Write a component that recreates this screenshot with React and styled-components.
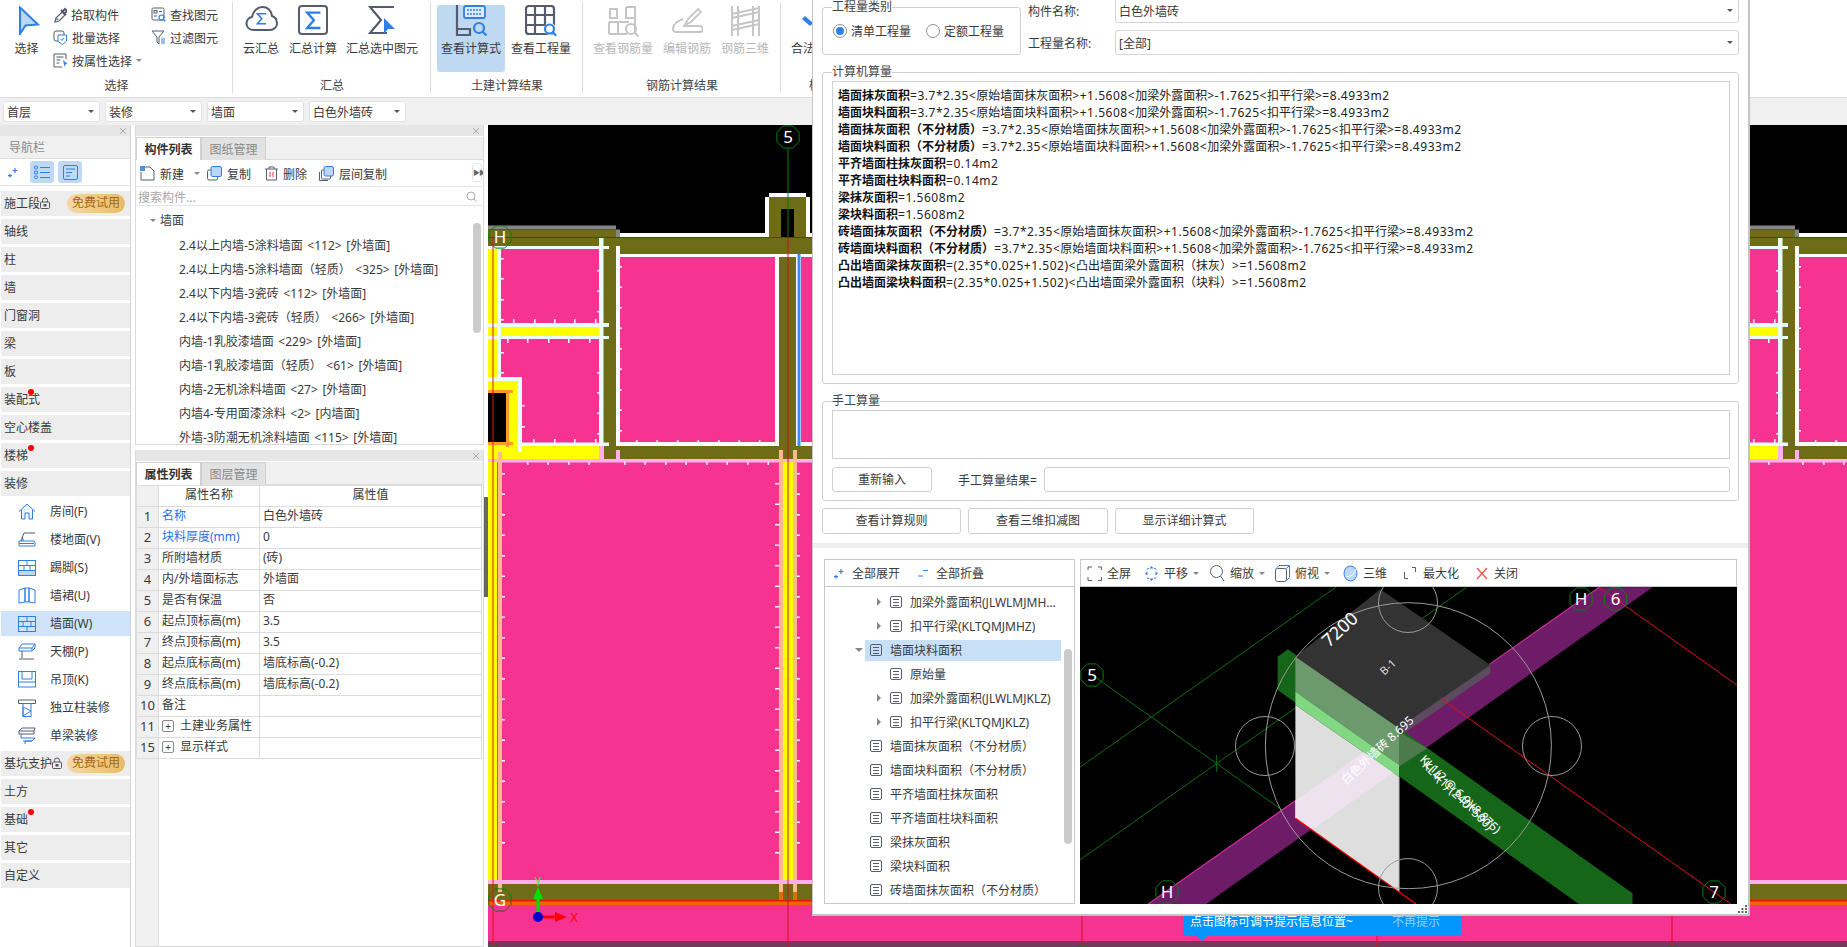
import React from "react";
import styled, { createGlobalStyle } from "styled-components";

const FONT = `"Noto Sans", "Noto Sans CJK SC", sans-serif`;
const GRAY = "#555c6e";
const BLUE = "#2f7fe6";
const PALE = "#bcd7f5";
const DIM = "#c6c6c6";

const Global = createGlobalStyle`
  html, body { margin: 0; padding: 0; background: #fff; overflow: hidden; }
  body { font-family: ${FONT}; font-size: 12px; color: #3a3a3a; }
  * { box-sizing: border-box; }
  svg { display: block; flex-shrink: 0; }
`;

const Page = styled.div`
  position: relative;
  width: 1847px;
  height: 947px;
  overflow: hidden;
  display: flex;
  flex-direction: column;
  background: #fff;
`;

/* ---------- ribbon ---------- */
const Ribbon = styled.div`
  display: flex;
  height: 98px;
  border-bottom: 1px solid #dcdcdc;
  background: #fff;
  flex-shrink: 0;
`;
const Group = styled.div`
  width: ${(p) => p.$w}px;
  display: flex;
  flex-direction: column;
  flex-shrink: 0;
  position: relative;
  &::after {
    content: "";
    position: absolute;
    right: 0;
    top: 2px;
    bottom: 4px;
    width: 1px;
    background: #ddd;
  }
`;
const GroupBody = styled.div`
  display: flex;
  height: 77px;
  padding-top: 5px;
  padding-left: ${(p) => p.$pl || 0}px;
  flex-shrink: 0;
`;
const GroupLabel = styled.div`
  text-align: center;
  line-height: 18px;
  color: #444;
`;
const BigBtn = styled.div`
  width: ${(p) => p.$w}px;
  margin-left: ${(p) => p.$ml || 0}px;
  height: 67px;
  display: flex;
  flex-direction: column;
  align-items: center;
  border-radius: 3px;
  flex-shrink: 0;
  background: ${(p) => (p.$active ? "#c0d9f3" : "transparent")};
  color: ${(p) => (p.$off ? "#b8b8b8" : "#3a3a3a")};
`;
const BigIcon = styled.div`
  height: 36px;
  display: flex;
  align-items: flex-start;
  justify-content: center;
`;
const BigText = styled.div`
  line-height: 16px;
  white-space: nowrap;
`;
const SmallCol = styled.div`
  display: flex;
  flex-direction: column;
  margin-top: -2px;
  width: ${(p) => p.$w}px;
  flex-shrink: 0;
`;
const SmallBtn = styled.div`
  height: 23px;
  display: flex;
  align-items: center;
  gap: 4px;
  white-space: nowrap;
`;
const Caret = styled.span`
  width: 0;
  height: 0;
  border-left: 3px solid transparent;
  border-right: 3px solid transparent;
  border-top: 3px solid ${(p) => p.$c || "#8a8a8a"};
  margin-left: ${(p) => p.$ml || 0}px;
  margin-right: ${(p) => p.$mr || 0}px;
  flex-shrink: 0;
`;

/* ---------- filter bar ---------- */
const FilterBar = styled.div`
  height: 27px;
  background: #f0f0f0;
  display: flex;
  gap: 5px;
  padding: 3px 3px;
  flex-shrink: 0;
`;
const Drop = styled.div`
  width: 97px;
  height: 21px;
  background: #fff;
  border: 1px solid #e2e2e2;
  border-radius: 3px;
  display: flex;
  align-items: center;
  justify-content: space-between;
  padding: 0 5px 0 3px;
`;

/* ---------- main ---------- */
const Main = styled.div`
  flex: 1;
  display: flex;
  min-height: 0;
`;
const Nav = styled.div`
  width: 131px;
  border-right: 1px solid #d4d4d4;
  display: flex;
  flex-direction: column;
  flex-shrink: 0;
`;
const Strip = styled.div`
  height: 11px;
  background: #e6e6e6;
  display: flex;
  align-items: center;
  justify-content: flex-end;
  padding-right: 3px;
  flex-shrink: 0;
`;
const NavTitle = styled.div`
  height: 23px;
  background: #f0f0f0;
  color: #8a8a8a;
  display: flex;
  align-items: center;
  padding-left: 9px;
  border-bottom: 1px solid #ddd;
`;
const NavTools = styled.div`
  height: 27px;
  display: flex;
  align-items: center;
  gap: 4px;
  padding-left: 8px;
  border-bottom: 1px solid #e6e6e6;
`;
const NavTool = styled.div`
  width: 24px;
  height: 22px;
  border-radius: 3px;
  background: #c0d9f3;
  display: flex;
  align-items: center;
  justify-content: center;
  margin-left: ${(p) => p.$ml || 0}px;
`;
const NavList = styled.div`
  display: flex;
  flex-direction: column;
  gap: 3px;
  padding: 5px 0 0 1px;
`;
const NavItem = styled.div`
  height: 25px;
  background: #ededed;
  display: flex;
  align-items: center;
  padding: 0 0 2px 3px;
  position: relative;
  white-space: nowrap;
`;
const Dot = styled.span`
  position: absolute;
  left: 27px;
  top: 2px;
  width: 6px;
  height: 6px;
  border-radius: 50%;
  background: #f00;
`;
const Pill = styled.span`
  position: absolute;
  left: 66px;
  top: 3px;
  width: 58px;
  height: 19px;
  border-radius: 10px;
  background: linear-gradient(90deg, #f6d8a6, #e9bb66);
  color: #a5660f;
  text-align: center;
  line-height: 18px;
`;
const SubItem = styled.div`
  height: 25px;
  display: flex;
  align-items: center;
  padding-left: 17px;
  gap: 14px;
  white-space: nowrap;
  background: ${(p) => (p.$on ? "#cfe4fb" : "transparent")};
  line-height: 22px;
`;

const Mid = styled.div`
  width: 349px;
  margin-left: 4px;
  display: flex;
  flex-direction: column;
  gap: 5px;
  flex-shrink: 0;
`;
const Panel = styled.div`
  border: 1px solid #dadada;
  border-top: 0;
  display: flex;
  flex-direction: column;
  height: ${(p) => (p.$h ? `${p.$h}px` : "auto")};
  flex: ${(p) => (p.$h ? "none" : 1)};
  min-height: 0;
  overflow: hidden;
`;
const Tabs = styled.div`
  display: flex;
  height: 23px;
  margin-top: 1px;
  background: #f0f0f0;
  border-bottom: 1px solid #dadada;
  flex-shrink: 0;
`;
const Tab = styled.div`
  width: ${(p) => p.$w}px;
  text-align: center;
  line-height: 23px;
  font-weight: ${(p) => (p.$on ? 700 : 400)};
  color: ${(p) => (p.$on ? "#333" : "#8a8a8a")};
  background: ${(p) => (p.$on ? "#fff" : "#e2e2e2")};
  border: 1px solid #d0d0d0;
  border-bottom: 0;
  height: 23px;
  flex-shrink: 0;
`;
const ListBar = styled.div`
  height: 27px;
  display: flex;
  align-items: center;
  padding: 1px 0 0 4px;
  gap: 5px;
  border-bottom: 1px solid #e6e6e6;
  position: relative;
  flex-shrink: 0;
`;
const BarGap = styled.span`
  width: ${(p) => p.$w}px;
  flex-shrink: 0;
`;
const Expander = styled.div`
  position: absolute;
  right: 1px;
  top: 3px;
  width: 10px;
  height: 19px;
  border: 1px solid #e6e6e6;
  border-radius: 3px;
  color: #666;
  font-size: 7px;
  line-height: 17px;
  text-align: center;
  letter-spacing: -1px;
`;
const Search = styled.div`
  height: 19px;
  display: flex;
  align-items: center;
  justify-content: space-between;
  padding: 1px 6px 0 2px;
  color: #a8a8a8;
  border-bottom: 1px solid #e6e6e6;
  flex-shrink: 0;
`;
const Tree = styled.div`
  position: relative;
  flex: 1;
  padding-top: 3px;
  overflow: hidden;
`;
const TreeHead = styled.div`
  height: 25px;
  display: flex;
  align-items: flex-start;
  gap: 4px;
  padding-left: 14px;
  line-height: 24px;
  & > span {
    margin-top: 10px;
  }
`;
const TreeItem = styled.div`
  height: 24px;
  line-height: 24px;
  padding-left: 43px;
  white-space: pre;
  word-spacing: 1.5px;
`;
const Thumb = styled.div`
  position: absolute;
  width: 8px;
  border-radius: 4px;
  background: #cbcbcb;
  top: ${(p) => p.$t}px;
  right: ${(p) => p.$r}px;
  height: ${(p) => p.$h}px;
`;
const PropBody = styled.div`
  flex: 1;
  background: linear-gradient(90deg, #f0f0f0 22px, #e0e0e0 22px, #e0e0e0 23px, #fff 23px);
  min-height: 0;
`;
const PropTable = styled.table`
  border-collapse: collapse;
  table-layout: fixed;
  width: 345px;
  background: #fff;
  & td {
    height: 21px;
    padding: 0 3px 2px;
    border: 1px solid #dcdcdc;
    white-space: nowrap;
    overflow: hidden;
    line-height: 18px;
  }
  & tr > td:first-child {
    background: #f0f0f0;
    text-align: center;
    padding: 0 0 2px;
    font-size: 13px;
  }
`;
const Head = styled.td`
  text-align: center;
`;
const PropName = styled.td`
  color: ${(p) => (p.$blue ? "#2b6fe8" : "inherit")};
`;
const PlusCell = styled.span`
  display: inline-flex;
  align-items: center;
  gap: 6px;
`;
const Plus = styled.span`
  width: 12px;
  height: 12px;
  border: 1px solid #8a8a8a;
  border-radius: 2px;
  font-size: 10px;
  line-height: 10px;
  text-align: center;
`;
const Splitter = styled.div`
  width: 4px;
  flex-shrink: 0;
  padding-top: 372px;
`;
const Grip = styled.div`
  height: 100px;
  background: #666;
`;
const Canvas = styled.div`
  flex: 1;
  min-width: 0;
  background: #000;
`;

/* ---------- floating dialog ---------- */
const Dialog = styled.div`
  position: absolute;
  left: 812px;
  top: 0;
  width: 938px;
  height: 916px;
  background: #fff;
  border: 1px solid #c4c4c4;
  border-top: 0;
  border-right-width: 2px;
  border-bottom-width: 2px;
  display: flex;
  flex-direction: column;
  z-index: 3;
`;
const Upper = styled.div`
  padding: 0 9px 0 9px;
  display: flex;
  flex-direction: column;
  gap: 10px;
`;
const TopRow = styled.div`
  display: flex;
  height: 55px;
  gap: 7px;
`;
const Field = styled.fieldset`
  margin: 0;
  padding: 2px 8px 8px 9px;
  min-width: 0;
  width: ${(p) => (p.$w ? `${p.$w}px` : "auto")};
  height: ${(p) => p.$h}px;
  border: 1px solid #d0d0d0;
  border-radius: 3px;
  flex-shrink: 0;
`;
const Legend = styled.legend`
  padding: 0;
  margin-left: 0;
  line-height: 14px;
  height: 14px;
  color: #444;
`;
const Radios = styled.div`
  display: flex;
  align-items: center;
  height: 30px;
  margin-left: 1px;
`;
const Radio = styled.span`
  width: 14px;
  height: 14px;
  border: 1px solid #8f8f8f;
  border-radius: 50%;
  display: flex;
  align-items: center;
  justify-content: center;
  margin-right: 4px;
  flex-shrink: 0;
  &::after {
    content: "";
    width: 8px;
    height: 8px;
    border-radius: 50%;
    background: ${(p) => (p.$on ? "#2f7fe6" : "transparent")};
  }
`;
const RadioText = styled.span`
  margin-right: ${(p) => p.$mr || 0}px;
  white-space: nowrap;
`;
const FormCol = styled.div`
  flex: 1;
  display: flex;
  flex-direction: column;
  gap: 7px;
  margin-top: -2px;
`;
const FormRow = styled.div`
  display: flex;
  align-items: center;
  height: 25px;
`;
const FormLabel = styled.span`
  width: 87px;
  flex-shrink: 0;
`;
const FormSelect = styled.div`
  flex: 1;
  height: 25px;
  border: 1px solid #d4d4d4;
  border-radius: 3px;
  display: flex;
  align-items: center;
  justify-content: space-between;
  padding: 0 5px 0 3px;
`;
const TextBox = styled.div`
  height: ${(p) => p.$h}px;
  border: 1px solid #d0d0d0;
  padding: 5px 5px;
  line-height: 17px;
  color: #222;
`;
const CalcLine = styled.div`
  white-space: pre;
  height: 17px;
`;
const Strong = styled.b`
  font-weight: 700;
  color: #111;
`;
const Latin = styled.span`
  letter-spacing: 0.52px;
`;
const InputRow = styled.div`
  display: flex;
  align-items: center;
  height: 25px;
  margin-top: 8px;
`;
const Btn = styled.div`
  width: ${(p) => p.$w}px;
  height: ${(p) => p.$h || 26}px;
  border: 1px solid #d0d0d0;
  border-radius: 3px;
  text-align: center;
  line-height: ${(p) => (p.$h || 26) - 2}px;
  flex-shrink: 0;
`;
const InputLabel = styled.span`
  margin-left: 26px;
  width: 86px;
  flex-shrink: 0;
  white-space: nowrap;
`;
const Input = styled.div`
  flex: 1;
  height: 25px;
  border: 1px solid #d0d0d0;
  border-radius: 3px;
`;
const BtnRow = styled.div`
  display: flex;
  gap: 7px;
  margin-top: -3px;
`;
const Rule = styled.div`
  height: 5px;
  background: #eee;
  margin-top: 9px;
  flex-shrink: 0;
`;
const Lower = styled.div`
  display: flex;
  gap: 5px;
  padding: 11px 0 0 11px;
  flex: 1;
  min-height: 0;
`;
const LeftCol = styled.div`
  width: 251px;
  height: 345px;
  display: flex;
  flex-direction: column;
  flex-shrink: 0;
`;
const RightCol = styled.div`
  width: 657px;
  height: 345px;
  display: flex;
  flex-direction: column;
  flex-shrink: 0;
`;
const MiniBar = styled.div`
  height: 28px;
  border: 1px solid #c8c8c8;
  display: flex;
  align-items: center;
  flex-shrink: 0;
  padding-left: ${(p) => p.$pl}px;
  background: #fff;
`;
const MiniItem = styled.div`
  display: flex;
  align-items: center;
  gap: ${(p) => (p.$gap === undefined ? 5 : p.$gap)}px;
  margin-right: ${(p) => p.$mr || 0}px;
  white-space: nowrap;
`;
const CalcTree = styled.div`
  flex: 1;
  position: relative;
  border: 1px solid #c8c8c8;
  border-top: 0;
  padding-top: 3px;
  overflow: hidden;
  min-height: 0;
`;
const CalcRow = styled.div`
  height: 24px;
  position: relative;
  display: flex;
  align-items: center;
  white-space: nowrap;
  padding-left: ${(p) => p.$pl}px;
`;
const RowFill = styled.div`
  position: absolute;
  left: 40px;
  width: 196px;
  top: 2px;
  height: 21px;
  background: #c8dff8;
`;
const RowCaret = styled.span`
  width: 10px;
  margin-right: 6px;
  height: 10px;
  position: relative;
  flex-shrink: 0;
  z-index: 1;
  ${(p) =>
    p.$open
      ? `&::after{content:"";position:absolute;left:1px;top:3px;border-left:4px solid transparent;border-right:4px solid transparent;border-top:4px solid #888;}`
      : p.$closed
      ? `&::after{content:"";position:absolute;left:3px;top:1px;border-top:4px solid transparent;border-bottom:4px solid transparent;border-left:4px solid #888;}`
      : ""}
`;
const RowIcon = styled.span`
  width: 12px;
  height: 12px;
  border: 1px solid #565c6c;
  border-radius: 2px;
  margin-right: 8px;
  flex-shrink: 0;
  position: relative;
  z-index: 1;
  background: linear-gradient(#565c6c, #565c6c) 2px 2px / 6px 1px no-repeat,
    linear-gradient(#565c6c, #565c6c) 2px 5px / 6px 1px no-repeat,
    linear-gradient(#565c6c, #565c6c) 2px 8px / 6px 1px no-repeat;
`;
const RowText = styled.span`
  position: relative;
  z-index: 1;
  width: ${(p) => (p.$clip ? "146px" : "auto")};
  overflow: hidden;
  text-overflow: ${(p) => (p.$clip ? "ellipsis" : "clip")};
`;
const Grippy = styled.div`
  position: absolute;
  right: 1px;
  bottom: 1px;
`;
const Tip = styled.div`
  position: absolute;
  left: 1183px;
  top: 900px;
  width: 278px;
  height: 36px;
  background: #0095ff;
  border-radius: 3px;
  z-index: 2;
  display: flex;
  align-items: flex-end;
  padding: 0 0 5px 7px;
  color: #fff;
  line-height: 18px;
  &::after {
    content: "";
    position: absolute;
    left: 14px;
    top: 36px;
    border-left: 5px solid transparent;
    border-right: 5px solid transparent;
    border-top: 5px solid #0095ff;
  }
`;
const TipMute = styled.span`
  margin-left: 39px;
  color: #8fd0ff;
`;

/* ---------- icons ---------- */
const Sigma = ({ x = 0, y = 0, s = 1, c = BLUE, w = 2.2 }) => (
  <path transform={`translate(${x} ${y}) scale(${s})`} d="M14 1H2l6 7-6 7h12" stroke={c} strokeWidth={w} fill="none" />
);
const Ic = ({ w, h, children }) => (
  <svg width={w} height={h} viewBox={`0 0 ${w} ${h}`} fill="none">
    {children}
  </svg>
);
const Mag = ({ x, y, r = 4, c = BLUE, w = 1.8 }) => (
  <g stroke={c} strokeWidth={w}>
    <circle cx={x} cy={y} r={r} fill="#fff" fillOpacity="0" />
    <path d={`M${x + r * 0.7} ${y + r * 0.7}l${r * 0.8} ${r * 0.8}`} />
  </g>
);
const icons = {
  arrow: (
    <Ic w={26} h={30}>
      <path d="M6 2.5l18 17-12.5 1L6 29z" fill={PALE} stroke={BLUE} strokeWidth="2" />
    </Ic>
  ),
  pick: (
    <Ic w={14} h={16}>
      <path d="M2 15l1-4 6-6 3 3-6 6z" stroke={GRAY} strokeWidth="1.2" />
      <path d="M8 3l5 5M9 5l3-3 2 2-3 3" stroke={GRAY} strokeWidth="2" />
      <path d="M3 13l1-2 2 2" fill={BLUE} />
    </Ic>
  ),
  batch: (
    <Ic w={15} h={15}>
      <rect x="1" y="1" width="10" height="10" rx="2" stroke={GRAY} />
      <path d="M5 5h8.5v6l-4 3.5-4.5-3z" fill="#fff" stroke={BLUE} />
      <path d="M7.5 9l1.5 1.5 2-2.5" stroke={BLUE} />
    </Ic>
  ),
  attr: (
    <Ic w={15} h={15}>
      <path d="M13 6V1H1v13h8" stroke={GRAY} />
      <path d="M3.5 4h7M3.5 7h4M3.5 10h3" stroke={GRAY} />
      <path d="M10 7l4.5 4-2 .3-1 2.7z" fill={BLUE} />
    </Ic>
  ),
  find: (
    <Ic w={15} h={15}>
      <rect x="1" y="1" width="12" height="12" rx="1.5" stroke={GRAY} />
      <rect x="3" y="3.5" width="3" height="2.5" stroke={GRAY} />
      <path d="M8 4.5h3M3 9h3" stroke={GRAY} />
      <Mag x={10.5} y={10.5} r={2.5} w={1.2} />
    </Ic>
  ),
  filter: (
    <Ic w={15} h={15}>
      <path d="M1 1h12L8 7v7l-2-2V7z" stroke={GRAY} />
      <path d="M10 9h4M10 11h4M10 13h4" stroke={BLUE} />
    </Ic>
  ),
  cloud: (
    <Ic w={33} h={27}>
      <path d="M9 25C4 25 1.500 22 1.500 18.500 1.500 15 4 12.500 7 12 8 6 12.500 2 17.500 2 22.500 2 26 5.500 27 11 30 12 32 15 32 18.500 32 22 29 25 25 25z" stroke={GRAY} strokeWidth="2" />
      <Sigma x={11} y={8} s={0.72} />
    </Ic>
  ),
  sumBox: (
    <Ic w={30} h={30}>
      <rect x="1" y="1" width="28" height="28" rx="3" stroke={GRAY} strokeWidth="2" />
      <Sigma x={7} y={6.500} s={1.1} w={2.2} />
    </Ic>
  ),
  sumSel: (
    <Ic w={28} h={30}>
      <path d="M26 2H2l11 13L2 28h17" stroke={GRAY} strokeWidth="2.2" />
      <path d="M16 13l11 11-7 0-4 5z" fill={BLUE} />
    </Ic>
  ),
  calc: (
    <Ic w={32} h={32}>
      <path d="M2 0v30h13v-6H2" stroke={GRAY} strokeWidth="2.2" />
      <rect x="9" y="1" width="21" height="12" rx="2" stroke={BLUE} strokeWidth="1.8" fill="#dceaf9" />
      <path d="M12 5h15M12 9h15" stroke={BLUE} strokeWidth="1.5" strokeDasharray="2 1" />
      <Mag x={24} y={23} r={5} w={2.2} />
    </Ic>
  ),
  qty: (
    <Ic w={32} h={32}>
      <rect x="1" y="1" width="28" height="28" rx="3" stroke={GRAY} strokeWidth="2.2" />
      <path d="M1 10h28M1 20h20M10 1v28M20 1v18" stroke={GRAY} strokeWidth="2.2" />
      <circle cx="25" cy="24" r="6" fill="#fff" />
      <Mag x={24.500} y={24} r={4.500} w={2.2} />
    </Ic>
  ),
  rebarQty: (
    <Ic w={32} h={32}>
      <path d="M3 4h7v9H3zM19 2h9v27M19 2v11h9M2 17h20M2 29h18M11 17v12M2 17v12" stroke={DIM} strokeWidth="2" />
      <Mag x={24} y={24} r={5} c={DIM} w={2.2} />
    </Ic>
  ),
  rebarEdit: (
    <Ic w={32} h={32}>
      <path d="M14 20l3-6 10-10 3 3-10 10-6 3z" stroke={DIM} strokeWidth="1.8" />
      <path d="M12 14C6 16 2 20 2 24c0 2 2 3 4 3h23c2 0 3-1 3-3s-2-3-4-3H12" stroke={DIM} strokeWidth="2" />
    </Ic>
  ),
  rebar3d: (
    <Ic w={32} h={32}>
      <path d="M3 1v30M9 1v30M24 1v30M30 1v30M3 9l27-6M3 21l27-6M3 13l27-6M3 25l27-6" stroke={DIM} strokeWidth="2" />
    </Ic>
  ),
  legal: (
    <Ic w={34} h={30}>
      <path d="M13 11l8 7-3 3-8-7z" fill={BLUE} />
    </Ic>
  ),
  close: (
    <Ic w={8} h={8}>
      <path d="M1 1l6 6M7 1L1 7" stroke="#aaa" />
    </Ic>
  ),
  expand: (
    <Ic w={11} h={11}>
      <path d="M7 1v5M4.500 3.500h5M2 7v3.500M0 8.700h4" stroke={BLUE} strokeWidth="1.200" />
    </Ic>
  ),
  collapse: (
    <Ic w={11} h={11}>
      <path d="M5 2.500h5M0 8h5" stroke={BLUE} strokeWidth="1.200" />
    </Ic>
  ),
  list: (
    <Ic w={16} h={14}>
      <rect x="0.500" y="1" width="3" height="3" rx="1" stroke={BLUE} />
      <rect x="0.500" y="6" width="3" height="3" rx="1" stroke={BLUE} />
      <rect x="0.500" y="11" width="3" height="2.500" rx="1" stroke={BLUE} />
      <path d="M6 2.500h10M6 7.500h10M6 12.500h10" stroke={BLUE} />
    </Ic>
  ),
  card: (
    <Ic w={15} h={15}>
      <rect x="0.500" y="0.500" width="14" height="14" rx="1.500" stroke={BLUE} />
      <path d="M3 4h9M3 7.500h6M3 11h4" stroke={BLUE} />
    </Ic>
  ),
  lock: (
    <Ic w={10} h={12}>
      <path d="M2.500 5V3.500a2.500 2.500 0 0 1 5 0V5" stroke="#555" />
      <rect x="0.500" y="5" width="9" height="6.500" rx="1" stroke="#555" />
      <rect x="3.500" y="7" width="3" height="2.500" fill="#555" />
    </Ic>
  ),
  newDoc: (
    <Ic w={15} h={15}>
      <path d="M3 1h7l4 4v9H1V6" stroke={GRAY} />
      <rect x="0" y="0" width="5" height="5" fill={BLUE} opacity=".85" />
    </Ic>
  ),
  copy: (
    <Ic w={15} h={15}>
      <rect x="0.500" y="4" width="10" height="10" rx="1.500" stroke={GRAY} />
      <rect x="4" y="0.500" width="10.500" height="10" rx="1.500" fill={PALE} stroke={BLUE} />
    </Ic>
  ),
  trash: (
    <Ic w={13} h={15}>
      <path d="M0 3h13M4 3V1h5v2M1.500 3v11h10V3" stroke={GRAY} />
      <path d="M5 6v5M8 6v5" stroke="#e33" />
    </Ic>
  ),
  layerCopy: (
    <Ic w={15} h={15}>
      <path d="M0.500 6v8.500H9" stroke={GRAY} />
      <rect x="2.500" y="4" width="9" height="9" rx="1" stroke={GRAY} />
      <rect x="5" y="0.500" width="9.500" height="9.500" rx="1.500" fill={PALE} stroke={BLUE} />
    </Ic>
  ),
  search: (
    <Ic w={11} h={11}>
      <circle cx="5" cy="5" r="4" stroke="#aaa" />
      <path d="M8 8l2.500 2.500" stroke="#aaa" />
    </Ic>
  ),
  house: (
    <Ic w={18} h={17}>
      <path d="M1 8.500L9 1l8 7.500M3.500 7v9h3.500v-6h4v6h3.500V7" stroke={BLUE} fill={PALE} fillOpacity=".35" />
    </Ic>
  ),
  floor: (
    <Ic w={18} h={15}>
      <path d="M3 9L6 1h11M4 5l1.500 4" stroke={GRAY} />
      <path d="M1 9h15l1 1v4H1zM1 11.500h15" stroke={BLUE} fill="#fff" />
    </Ic>
  ),
  skirt: (
    <Ic w={18} h={16}>
      <rect x="0.500" y="0.500" width="17" height="15" stroke={BLUE} />
      <rect x="0.500" y="10.500" width="17" height="5" fill={PALE} stroke={BLUE} />
      <path d="M0.500 5.500h17M9 0.500v5M6 5.500v5M12 5.500v5" stroke={BLUE} />
    </Ic>
  ),
  dado: (
    <Ic w={18} h={17}>
      <path d="M1 3l6-2v14l-6 1zM7 1h4v14H7zM11 1l6 2v13l-6-1z" stroke={BLUE} />
    </Ic>
  ),
  wall: (
    <Ic w={18} h={16}>
      <rect x="0.500" y="0.500" width="17" height="15" stroke={BLUE} />
      <path d="M0.500 5.500h17M0.500 10.500h17M9 0.500v5M5 5.500v5M13 5.500v5M9 10.500v5" stroke={BLUE} />
    </Ic>
  ),
  ceil: (
    <Ic w={18} h={17}>
      <path d="M1 5h13l3-4H4zM1 5v3h13V5M14 8l3-3V1" stroke={BLUE} fill="#fff" />
      <path d="M4 8v7M1 16h15" stroke={GRAY} />
    </Ic>
  ),
  drop: (
    <Ic w={18} h={17}>
      <rect x="0.500" y="0.500" width="17" height="15.500" stroke={BLUE} />
      <path d="M4 1v7h10V1" stroke={BLUE} fill="#fff" />
      <path d="M0.500 11h17" stroke={BLUE} />
    </Ic>
  ),
  column: (
    <Ic w={18} h={18}>
      <path d="M0.500 1h17v3.500H0.500z" stroke={GRAY} />
      <rect x="5" y="4.500" width="8" height="13" stroke={BLUE} />
      <path d="M5 8l8 4-8 5z" stroke={BLUE} />
    </Ic>
  ),
  beam: (
    <Ic w={18} h={17}>
      <path d="M1 4L4 1h13l-1 3zM1 4v3h15V4" stroke={GRAY} />
      <path d="M3 7v4h14l-3 3H7v3M5 14h9" stroke={BLUE} />
    </Ic>
  ),
  full: (
    <Ic w={15} h={15}>
      <path d="M1 4V1h4M11 1h3.500v3M14.500 11v3.500H11M5 14.500H1V11" stroke={GRAY} />
    </Ic>
  ),
  move: (
    <Ic w={15} h={17}>
      <path d="M7.500 1l2 2.500h-4zM7.500 16l2-2.500h-4zM1 8.500l2.500-2v4zM14 8.500l-2.500-2v4z" fill={BLUE} />
      <path d="M5 3.500h-1.500L3 5M10 3.500h1.500L12 5M3 12l.5 1.500H5M12 12l-.5 1.500H10" stroke={BLUE} strokeWidth=".8" />
    </Ic>
  ),
  zoom: (
    <Ic w={15} h={17}>
      <circle cx="6.500" cy="6.500" r="6" stroke={GRAY} />
      <path d="M10.500 11l3.500 5" stroke={GRAY} />
    </Ic>
  ),
  cube: (
    <Ic w={15} h={17}>
      <rect x="0.500" y="3.500" width="11" height="13" rx="2" stroke={GRAY} />
      <path d="M1 3.500L4 0.500h10.500v12l-3 3M11.500 3.500l3-3" stroke={BLUE} fill="none" />
    </Ic>
  ),
  sphere: (
    <Ic w={15} h={17}>
      <ellipse cx="7.500" cy="8.500" rx="6.500" ry="7.500" fill={PALE} stroke={BLUE} />
      <path d="M3 11.500C8 12 12 9 13 4" stroke="#fff" />
    </Ic>
  ),
  maxi: (
    <Ic w={12} h={12}>
      <path d="M0.500 5v6.500H4M8 0.500h3.500V5" stroke={GRAY} />
    </Ic>
  ),
  cross: (
    <Ic w={12} h={13}>
      <path d="M1 1l10 11M11 1L1 12" stroke="#f0504a" strokeWidth="1.200" />
    </Ic>
  ),
  grip: (
    <Ic w={9} h={8}>
      <path d="M7 0h2v2H7zM3.500 3h2v2h-2zM7 3h2v2H7zM0 6h2v2H0zM3.500 6h2v2h-2zM7 6h2v2H7z" fill="#666" />
    </Ic>
  ),
};

/* ---------- main drawing ---------- */
const OLIVE = "#6f6c18";
const PINK = "#f73391";
const RAIL = "#e9fdfb";
const STRIP = "#ffb0ec";
const PEACH = "#ffb98f";
const steps = (from, to, step = 20.5) => {
  const out = [];
  for (let v = from; v <= to; v += step) out.push(v);
  return out;
};
const octagon = (cx, cy, r) =>
  Array.from({ length: 8 }, (_, i) => {
    const a = (i * Math.PI * 2) / 8 + Math.PI / 8;
    return `${(cx + r * Math.cos(a)).toFixed(1)},${(cy + r * Math.sin(a)).toFixed(1)}`;
  }).join(" ");

const Marker = ({ x, y, t, r = 12, size = 17 }) => (
  <g>
    <polygon points={octagon(x, y, r)} fill="none" stroke="#0a7d12" strokeWidth="1" />
    <text x={x} y={y + size * 0.36} fill="#fff" fontSize={size} textAnchor="middle">
      {t}
    </text>
  </g>
);
const HTicks = ({ xs, y, h = 3, c = "#fff" }) => xs.map((x) => <rect key={x} x={x} y={y} width="1.500" height={h} fill={c} />);
const VTicks = ({ ys, x, w = 3, c = "#fff" }) => ys.map((y) => <rect key={y} x={x} y={y} width={w} height="1.500" fill={c} />);

const Module = ({ dx }) => (
  <g transform={`translate(${dx} 0)`}>
    <rect x="488" y="225.500" width="128" height="4" fill="#868686" />
    <rect x="616" y="229.500" width="4" height="8" fill="#868686" />
    <rect x="488" y="229.500" width="128" height="8" fill={OLIVE} />
    <rect x="620" y="233" width="400" height="4" fill="#fff" />
    <rect x="488" y="237" width="532" height="222" fill={OLIVE} />
    {/* left rooms */}
    <rect x="488" y="246" width="9" height="214" fill="#ff0" />
    <rect x="501" y="249" width="98" height="74" fill={PINK} />
    <rect x="501" y="339" width="98" height="104" fill={PINK} />
    <rect x="488" y="327" width="111" height="9" fill="#ff0" />
    <rect x="488" y="446" width="111" height="13" fill="#ff0" />
    <rect x="488" y="246" width="121" height="3" fill={RAIL} />
    <rect x="488" y="323" width="121" height="4" fill={RAIL} />
    <rect x="488" y="336" width="121" height="3" fill={RAIL} />
    <rect x="497" y="246" width="4" height="135" fill={RAIL} />
    <rect x="599" y="237" width="4.500" height="215" fill={RAIL} />
    <rect x="522" y="442.500" width="87" height="3.500" fill={RAIL} />
    <rect x="599" y="446" width="5" height="13" fill={STRIP} />
    <VTicks ys={[258, 278, 299, 319, 352, 372]} x={501} />
    <VTicks ys={[270, 290.500, 311, 372, 392, 412.500, 433]} x={597} w={2} />
    <HTicks xs={[513, 534, 554, 574, 595]} y={319} h={4} />
    <HTicks xs={[507, 527, 548, 568, 589]} y={339} h={4} />
    <HTicks xs={[533, 554, 574, 595]} y={439} h={3.500} />
    {/* centre room */}
    <rect x="616" y="246" width="4" height="200" fill="#fff" />
    <rect x="616" y="254" width="400" height="3" fill="#fff" />
    <rect x="616" y="442" width="400" height="4" fill="#fff" />
    <rect x="620" y="257" width="400" height="185" fill={PINK} />
    <rect x="616" y="450" width="4" height="9" fill={STRIP} />
    <VTicks ys={steps(266, 434)} x={620} w={2} />
    <HTicks xs={steps(636, 780)} y={440} h={2} />
  </g>
);

const Stage = () => (
  <svg width="1359" height="822" viewBox="488 125 1359 822">
    <rect x="488" y="125" width="1359" height="822" fill="#000" />
    <rect x="488" y="459" width="1359" height="488" fill={PINK} />
    {[0, 1179].map((dx) => (
      <Module key={dx} dx={dx} />
    ))}
    {/* door block */}
    <rect x="488" y="381" width="32" height="65" fill="#ff0" />
    <rect x="488" y="377" width="30" height="4" fill={RAIL} />
    <rect x="518" y="377" width="4" height="75" fill={RAIL} />
    <rect x="488" y="392" width="18" height="50" fill="#000" />
    <rect x="488" y="390" width="25" height="3" fill="#ff9a2a" />
    <rect x="488" y="442" width="25" height="3" fill="#ff9a2a" />
    <rect x="506" y="390" width="3" height="57" fill="#ff9a2a" />
    <VTicks ys={[405, 426]} x={522} />
    {/* centre column cap */}
    <rect x="765" y="197" width="45" height="36" fill="#fff" />
    <rect x="769" y="193" width="37" height="4" fill="#fff" />
    <rect x="769" y="197" width="37" height="40" fill={OLIVE} />
    <rect x="781" y="209" width="13" height="28" fill="#000" />
    <rect x="779" y="257" width="17" height="189" fill={OLIVE} />
    <rect x="775" y="254" width="4" height="192" fill="#fff" />
    <rect x="796" y="254" width="5" height="192" fill="#fff" />
    <rect x="797.500" y="254" width="3" height="192" fill="#3b8bff" />
    {/* lower room */}
    <rect x="488" y="459" width="1359" height="3.500" fill={STRIP} />
    <HTicks xs={steps(527, 600)} y={462} />
    <HTicks xs={steps(624, 780)} y={462} />
    <HTicks xs={[1768, 1802, 1823, 1843]} y={462} />
    <rect x="488" y="462" width="9" height="418" fill="#ff0" />
    <rect x="498" y="452" width="4" height="436" fill={PEACH} />
    <VTicks ys={steps(473, 862)} x={502} />
    <rect x="779" y="450" width="4" height="438" fill={PEACH} />
    <rect x="783" y="462" width="10" height="418" fill="#ff0" />
    <rect x="793" y="450" width="4" height="438" fill={PEACH} />
    <VTicks ys={steps(483, 872)} x={775} w={4} />
    <VTicks ys={steps(473, 862)} x={797} />
    <rect x="488" y="884" width="1359" height="16" fill={OLIVE} />
    <rect x="488" y="880" width="1359" height="4" fill={STRIP} />
    <rect x="488" y="901" width="1359" height="4" fill="#e46b00" />
    <rect x="498" y="884" width="4" height="8" fill={PEACH} />
    <rect x="779" y="884" width="4" height="8" fill={PEACH} />
    <rect x="793" y="884" width="4" height="8" fill={PEACH} />
    <rect x="779" y="892" width="4" height="9" fill="#e46b00" />
    <rect x="793" y="892" width="4" height="9" fill="#e46b00" />
    <rect x="488" y="941" width="1359" height="6" fill="#743a5c" />
    {/* axis lines */}
    <rect x="488" y="237" width="1359" height="1" fill="#d90000" />
    <rect x="488" y="900" width="1359" height="1.500" fill="#f01010" />
    <rect x="787.500" y="149" width="1" height="88" fill="#0a7d12" />
    {[493, 788, 1082, 1377, 1672].map((x) => (
      <rect key={x} x={x - 0.5} y="237" width="1" height="710" fill={x === 493 ? "#ee1111" : "#d80f1f"} />
    ))}
    {[493, 1082, 1672].map((x) => (
      <polygon key={x} points={octagon(x, 958, 12)} fill="none" stroke="#0a7d12" />
    ))}
    <Marker x={788} y={137} t="5" />
    <Marker x={500} y={237} t="H" />
    <Marker x={500} y={900} t="G" />
    {/* coordinate gizmo */}
    <rect x="536.500" y="896" width="3" height="21" fill="#00e000" />
    <polygon points="533,899 538,887 543,899" fill="#00e000" />
    <text x="538" y="886" fill="#40e040" fontSize="12" textAnchor="middle">Y</text>
    <rect x="538" y="915.500" width="18" height="3" fill="#f00" />
    <polygon points="555,912 567,917 555,922" fill="#f00" />
    <circle cx="538" cy="917" r="5" fill="#0000c8" />
    <text x="574" y="922" fill="#f00" fontSize="13" textAnchor="middle">X</text>
  </svg>
);

/* ---------- 3D preview ---------- */
const P = (X, Y) => [1070 + X / 2.24, 550 + Y / 3];
const pts = (...list) => list.map(([X, Y]) => P(X, Y).map((v) => v.toFixed(1)).join(",")).join(" ");
const Seg = ({ a, b, c, w = 1 }) => {
  const [x1, y1] = P(...a);
  const [x2, y2] = P(...b);
  return <line x1={x1} y1={y1} x2={x2} y2={y2} stroke={c} strokeWidth={w} />;
};
const Label = ({ at, rot, size, fill = "#fff", children }) => {
  const [x, y] = P(...at);
  return (
    <text x={x} y={y} fill={fill} fontSize={size} textAnchor="middle" transform={`rotate(${rot} ${x} ${y})`}>
      {children}
    </text>
  );
};
const Preview = () => (
  <svg width="657" height="317" viewBox="1080 587 657 317">
    <rect x="1080" y="587" width="657" height="317" fill="#000" />
    <Seg a={[22, 652]} b={[595, 112]} c="#0a6e10" />
    <Seg a={[22, 930]} b={[888, 112]} c="#0a6e10" />
    <Seg a={[50, 375]} b={[480, 785]} c="#0a6e10" />
    <Seg a={[328, 615]} b={[328, 665]} c="#0a6e10" />
    <polygon points={pts([175, 1062], [1185, 112], [1305, 112], [305, 1062])} fill="#6e1c68" />
    <Seg a={[175, 1062]} b={[1185, 112]} c="#d12f9b" w={1.2} />
    <polygon points={pts([488, 298], [1260, 1030], [1260, 1062], [1140, 1062], [465, 420], [465, 320])} fill="#16661a" />
    <polygon points={pts([695, 118], [942, 345], [942, 368], [745, 552], [505, 320])} fill="#333" />
    <polygon points={pts([942, 345], [942, 370], [750, 548], [737, 533])} fill="#5c4a5e" />
    <polygon points={pts([505, 320], [737, 535], [737, 645], [505, 425])} fill="#6c9a6c" />
    <polygon points={pts([737, 545], [800, 595], [737, 650])} fill="#4c7a4c" />
    <polygon points={pts([505, 425], [737, 645], [737, 680], [505, 465])} fill="#82d882" />
    <polygon points={pts([505, 465], [737, 680], [737, 1025], [505, 805])} fill="#dedede" />
    <polygon points={pts([505, 752], [658, 607], [724, 668], [542, 839], [505, 805])} fill="#efe2ef" />
    <Seg a={[737, 680]} b={[737, 1025]} c="#bbb" />
    <Seg a={[505, 805]} b={[775, 1062]} c="#f00" w={1.2} />
    <Seg a={[830, 445]} b={[1480, 1062]} c="#e01010" />
    <Seg a={[1185, 112]} b={[1494, 405]} c="#e01010" />
    <g fill="none" stroke="#9a9a9a">
      <circle cx="1408.400" cy="745.700" r="143" />
      <circle cx="1408" cy="603" r="29.500" />
      <circle cx="1408" cy="888" r="29.500" />
      <circle cx="1265" cy="746" r="29.500" />
      <circle cx="1552" cy="746" r="29.500" />
    </g>
    <Label at={[614, 252]} rot={-43} size={18}>7200</Label>
    <Label at={[718, 360]} rot={-43} size={11} fill="#ddd">B-1</Label>
    <Label at={[695, 610]} rot={-43} size={12}>白色外墙砖 8.695</Label>
    <Label at={[862, 745]} rot={44} size={12}>KL4(1) (240*500)</Label>
    <Label at={[868, 742]} rot={44} size={12}>KL1(2 @ 6.9)(8.875)</Label>
    <Marker x={1092} y={675} t="5" />
    <Marker x={1581} y={599} t="H" />
    <Marker x={1615.500} y={599} t="6" />
    <Marker x={1167} y={892} t="H" />
    <Marker x={1714} y={892} t="7" />
  </svg>
);

/* ---------- data ---------- */
const navTop = [
  { t: "施工段", lock: true, pill: true },
  { t: "轴线" },
  { t: "柱" },
  { t: "墙" },
  { t: "门窗洞" },
  { t: "梁" },
  { t: "板" },
  { t: "装配式", dot: true },
  { t: "空心楼盖" },
  { t: "楼梯", dot: true },
  { t: "装修" },
];
const navSub = [
  ["house", "房间(F)"],
  ["floor", "楼地面(V)"],
  ["skirt", "踢脚(S)"],
  ["dado", "墙裙(U)"],
  ["wall", "墙面(W)", true],
  ["ceil", "天棚(P)"],
  ["drop", "吊顶(K)"],
  ["column", "独立柱装修"],
  ["beam", "单梁装修"],
];
const navEnd = [
  { t: "基坑支护", lock: true, pill: true },
  { t: "土方" },
  { t: "基础", dot: true },
  { t: "其它" },
  { t: "自定义" },
];
const parts = [
  "2.4以上内墙-5涂料墙面 <112> [外墙面]",
  "2.4以上内墙-5涂料墙面（轻质） <325> [外墙面]",
  "2.4以下内墙-3瓷砖 <112> [外墙面]",
  "2.4以下内墙-3瓷砖（轻质） <266> [外墙面]",
  "内墙-1乳胶漆墙面 <229> [外墙面]",
  "内墙-1乳胶漆墙面（轻质） <61> [外墙面]",
  "内墙-2无机涂料墙面 <27> [外墙面]",
  "内墙4-专用面漆涂料 <2> [内墙面]",
  "外墙-3防潮无机涂料墙面 <115> [外墙面]",
];
const props = [
  ["1", "名称", "白色外墙砖", true],
  ["2", "块料厚度(mm)", "0", true],
  ["3", "所附墙材质", "(砖)"],
  ["4", "内/外墙面标志", "外墙面"],
  ["5", "是否有保温", "否"],
  ["6", "起点顶标高(m)", "3.5"],
  ["7", "终点顶标高(m)", "3.5"],
  ["8", "起点底标高(m)", "墙底标高(-0.2)"],
  ["9", "终点底标高(m)", "墙底标高(-0.2)"],
  ["10", "备注", ""],
];
const mortar = "=3.7*2.35<原始墙面抹灰面积>+1.5608<加梁外露面积>-1.7625<扣平行梁>=8.4933m2";
const tile = "=3.7*2.35<原始墙面块料面积>+1.5608<加梁外露面积>-1.7625<扣平行梁>=8.4933m2";
const calc = [
  ["墙面抹灰面积", mortar],
  ["墙面块料面积", tile],
  ["墙面抹灰面积（不分材质）", mortar],
  ["墙面块料面积（不分材质）", tile],
  ["平齐墙面柱抹灰面积", "=0.14m2"],
  ["平齐墙面柱块料面积", "=0.14m2"],
  ["梁抹灰面积", "=1.5608m2"],
  ["梁块料面积", "=1.5608m2"],
  ["砖墙面抹灰面积（不分材质）", mortar],
  ["砖墙面块料面积（不分材质）", tile],
  ["凸出墙面梁抹灰面积", "=(2.35*0.025+1.502)<凸出墙面梁外露面积（抹灰）>=1.5608m2"],
  ["凸出墙面梁块料面积", "=(2.35*0.025+1.502)<凸出墙面梁外露面积（块料）>=1.5608m2"],
];
const calcTree = [
  [2, "加梁外露面积(JLWLMJMHZ)", "closed", true],
  [2, "扣平行梁(KLTQMJMHZ)", "closed"],
  [1, "墙面块料面积", "open"],
  [2, "原始量"],
  [2, "加梁外露面积(JLWLMJKLZ)", "closed"],
  [2, "扣平行梁(KLTQMJKLZ)", "closed"],
  [1, "墙面抹灰面积（不分材质）"],
  [1, "墙面块料面积（不分材质）"],
  [1, "平齐墙面柱抹灰面积"],
  [1, "平齐墙面柱块料面积"],
  [1, "梁抹灰面积"],
  [1, "梁块料面积"],
  [1, "砖墙面抹灰面积（不分材质）"],
];

const NavRow = ({ t, lock, pill, dot }) => (
  <NavItem>
    {t}
    {lock && icons.lock}
    {dot && <Dot />}
    {pill && <Pill>免费试用</Pill>}
  </NavItem>
);
const Big = ({ w, ml, icon, text, active, off }) => (
  <BigBtn $w={w} $ml={ml} $active={active} $off={off}>
    <BigIcon>{icons[icon]}</BigIcon>
    <BigText>{text}</BigText>
  </BigBtn>
);
/* latin runs of the formula are set slightly wider, as in the original's hinted font */
const Formula = ({ text }) =>
  text.split(/([\u4e00-\u9fff（）]+)/).map((run, i) => (i % 2 ? run : <Latin key={i}>{run}</Latin>));

export default function App() {
  return (
    <Page>
      <Global />
      <Ribbon>
        <Group $w={233}>
          <GroupBody>
            <Big w={53} icon="arrow" text="选择" />
            <SmallCol $w={98}>
              <SmallBtn>{icons.pick}拾取构件</SmallBtn>
              <SmallBtn>{icons.batch}批量选择</SmallBtn>
              <SmallBtn>
                {icons.attr}按属性选择<Caret />
              </SmallBtn>
            </SmallCol>
            <SmallCol $w={70}>
              <SmallBtn>{icons.find}查找图元</SmallBtn>
              <SmallBtn>{icons.filter}过滤图元</SmallBtn>
            </SmallCol>
          </GroupBody>
          <GroupLabel>选择</GroupLabel>
        </Group>
        <Group $w={198}>
          <GroupBody>
            <Big w={56} icon="cloud" text="云汇总" />
            <Big w={48} icon="sumBox" text="汇总计算" />
            <Big w={90} icon="sumSel" text="汇总选中图元" />
          </GroupBody>
          <GroupLabel>汇总</GroupLabel>
        </Group>
        <Group $w={152}>
          <GroupBody $pl={6}>
            <Big w={68} icon="calc" text="查看计算式" active />
            <Big w={72} icon="qty" text="查看工程量" />
          </GroupBody>
          <GroupLabel>土建计算结果</GroupLabel>
        </Group>
        <Group $w={198}>
          <GroupBody $pl={10}>
            <Big w={60} icon="rebarQty" text="查看钢筋量" off />
            <Big w={68} icon="rebarEdit" text="编辑钢筋" off />
            <Big w={48} icon="rebar3d" text="钢筋三维" off />
          </GroupBody>
          <GroupLabel>钢筋计算结果</GroupLabel>
        </Group>
        <Group $w={80}>
          <GroupBody>
            <Big w={36} ml={10} icon="legal" text="合法性" />
          </GroupBody>
          <GroupLabel>检查</GroupLabel>
        </Group>
      </Ribbon>

      <FilterBar>
        {["首层", "装修", "墙面", "白色外墙砖"].map((t) => (
          <Drop key={t}>
            {t}
            <Caret $c="#555" />
          </Drop>
        ))}
      </FilterBar>

      <Main>
        <Nav>
          <Strip>{icons.close}</Strip>
          <NavTitle>导航栏</NavTitle>
          <NavTools>
            {icons.expand}
            <NavTool $ml={7}>{icons.list}</NavTool>
            <NavTool>{icons.card}</NavTool>
          </NavTools>
          <NavList>
            {navTop.map((n) => (
              <NavRow key={n.t} {...n} />
            ))}
            {navSub.map(([ic, t, on]) => (
              <SubItem key={t} $on={on}>
                {icons[ic]}
                {t}
              </SubItem>
            ))}
            {navEnd.map((n) => (
              <NavRow key={n.t} {...n} />
            ))}
          </NavList>
        </Nav>

        <Mid>
          <Panel $h={320}>
            <Strip>{icons.close}</Strip>
            <Tabs>
              <Tab $on $w={65}>构件列表</Tab>
              <Tab $w={65}>图纸管理</Tab>
            </Tabs>
            <ListBar>
              {icons.newDoc}
              新建
              <Caret $ml={5} $mr={2} />
              {icons.copy}
              复制
              <BarGap $w={4} />
              {icons.trash}
              删除
              <BarGap $w={2} />
              {icons.layerCopy}
              层间复制
              <Expander>▶▶</Expander>
            </ListBar>
            <Search>
              搜索构件...
              {icons.search}
            </Search>
            <Tree>
              <TreeHead>
                <Caret />
                墙面
              </TreeHead>
              {parts.map((p) => (
                <TreeItem key={p}>{p}</TreeItem>
              ))}
              <Thumb $t={17} $r={2} $h={110} />
            </Tree>
          </Panel>
          <Panel>
            <Strip>{icons.close}</Strip>
            <Tabs>
              <Tab $on $w={65}>属性列表</Tab>
              <Tab $w={65}>图层管理</Tab>
            </Tabs>
            <PropBody>
              <PropTable>
                <colgroup>
                  <col width="22" />
                  <col width="101" />
                  <col width="222" />
                </colgroup>
                <tbody>
                  <tr>
                    <td />
                    <Head>属性名称</Head>
                    <Head>属性值</Head>
                  </tr>
                  {props.map(([n, k, v, blue]) => (
                    <tr key={n}>
                      <td>{n}</td>
                      <PropName $blue={blue}>{k}</PropName>
                      <td>{v}</td>
                    </tr>
                  ))}
                  {[
                    ["11", "土建业务属性"],
                    ["15", "显示样式"],
                  ].map(([n, k]) => (
                    <tr key={n}>
                      <td>{n}</td>
                      <td>
                        <PlusCell>
                          <Plus>+</Plus>
                          {k}
                        </PlusCell>
                      </td>
                      <td />
                    </tr>
                  ))}
                </tbody>
              </PropTable>
            </PropBody>
          </Panel>
        </Mid>
        <Splitter>
          <Grip />
        </Splitter>
        <Canvas>
          <Stage />
        </Canvas>
      </Main>

      <Tip>
        点击图标可调节提示信息位置~
        <TipMute>不再提示</TipMute>
      </Tip>

      <Dialog>
        <Upper>
          <TopRow>
            <Field $w={199} $h={55}>
              <Legend>工程量类别</Legend>
              <Radios>
                <Radio $on />
                <RadioText $mr={15}>清单工程量</RadioText>
                <Radio />
                <RadioText>定额工程量</RadioText>
              </Radios>
            </Field>
            <FormCol>
              <FormRow>
                <FormLabel>构件名称:</FormLabel>
                <FormSelect>
                  白色外墙砖
                  <Caret $c="#555" />
                </FormSelect>
              </FormRow>
              <FormRow>
                <FormLabel>工程量名称:</FormLabel>
                <FormSelect>
                  [全部]
                  <Caret $c="#555" />
                </FormSelect>
              </FormRow>
            </FormCol>
          </TopRow>
          <Field $h={319}>
            <Legend>计算机算量</Legend>
            <TextBox $h={294}>
              {calc.map(([a, b], i) => (
                <CalcLine key={i}>
                  <Strong>{a}</Strong>
                  <Formula text={b} />
                </CalcLine>
              ))}
            </TextBox>
          </Field>
          <Field $h={107}>
            <Legend>手工算量</Legend>
            <TextBox $h={49} />
            <InputRow>
              <Btn $w={100} $h={25}>重新输入</Btn>
              <InputLabel>手工算量结果=</InputLabel>
              <Input />
            </InputRow>
          </Field>
          <BtnRow>
            <Btn $w={139}>查看计算规则</Btn>
            <Btn $w={140}>查看三维扣减图</Btn>
            <Btn $w={139}>显示详细计算式</Btn>
          </BtnRow>
        </Upper>
        <Rule />
        <Lower>
          <LeftCol>
            <MiniBar $pl={9}>
              <MiniItem $mr={18} $gap={7}>{icons.expand}全部展开</MiniItem>
              <MiniItem $gap={7}>{icons.collapse}全部折叠</MiniItem>
            </MiniBar>
            <CalcTree>
              {calcTree.map(([d, t, kind, clip]) => (
                <CalcRow key={t} $pl={d === 2 ? 49 : 29}>
                  {kind === "open" && <RowFill />}
                  <RowCaret $open={kind === "open"} $closed={kind === "closed"} />
                  <RowIcon />
                  <RowText $clip={clip}>{t}</RowText>
                </CalcRow>
              ))}
              <Thumb $t={62} $r={2} $h={195} />
            </CalcTree>
          </LeftCol>
          <RightCol>
            <MiniBar $pl={6}>
              <MiniItem $mr={13}>{icons.full}全屏</MiniItem>
              <MiniItem $mr={11}>
                {icons.move}平移
                <Caret />
              </MiniItem>
              <MiniItem $mr={10}>
                {icons.zoom}缩放
                <Caret />
              </MiniItem>
              <MiniItem $mr={13}>
                {icons.cube}俯视
                <Caret />
              </MiniItem>
              <MiniItem $mr={17}>{icons.sphere}三维</MiniItem>
              <MiniItem $mr={17} $gap={7}>{icons.maxi}最大化</MiniItem>
              <MiniItem $gap={6}>{icons.cross}关闭</MiniItem>
            </MiniBar>
            <Preview />
          </RightCol>
        </Lower>
        <Grippy>{icons.grip}</Grippy>
      </Dialog>
    </Page>
  );
}
